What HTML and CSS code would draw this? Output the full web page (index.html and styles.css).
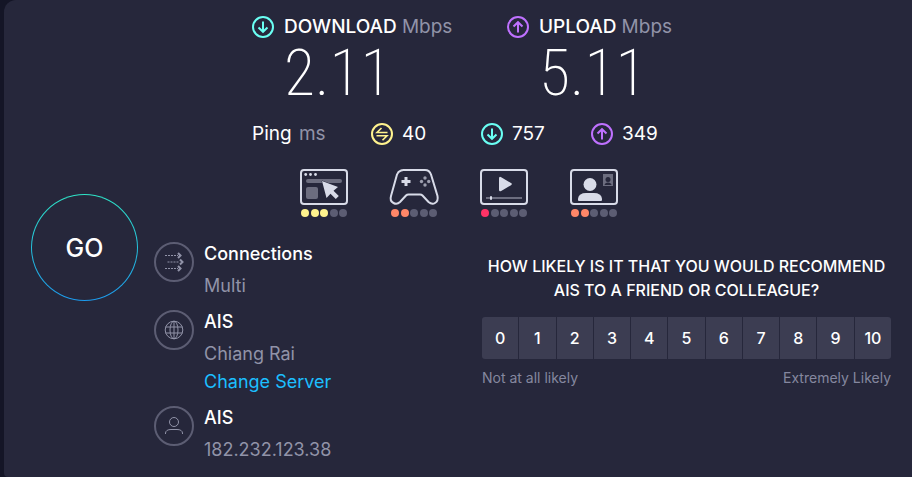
FILE: index.html
```html
<!DOCTYPE html>
<html lang="en">
<head>
	<meta charset="utf-8">
	<meta name="viewport" content="width=device-width, initial-scale=1">
	<title>Speed Test</title>
	<link rel="stylesheet" href="styles.css">
</head>
<body>
	<!-- shared icons -->
	<svg class="sprite" aria-hidden="true">
		<symbol id="icon-down" viewBox="0 0 22 22">
			<circle cx="11" cy="11" r="10"/>
			<path d="M11 5.500v10M6.500 11.500l4.500 4.300 4.500-4.300"/>
		</symbol>
		<symbol id="icon-up" viewBox="0 0 22 22">
			<circle cx="11" cy="11" r="10"/>
			<path d="M11 16.500v-10M6.500 10.500L11 6.200l4.500 4.300"/>
		</symbol>
		<symbol id="icon-ping" viewBox="0 0 22 22">
			<circle cx="11" cy="11" r="10"/>
			<path stroke-width="1.600" d="M16.500 9.500H6l4.500-4.500M5.500 12.800H16l-4.500 4.500"/>
		</symbol>
	</svg>

	<main class="panel">
		<button class="go" type="button">GO</button>

		<div class="content">
			<section class="results">
				<div class="speeds">
					<div class="speed">
						<svg class="icon download"><use href="#icon-down"/></svg>
						<h2>DOWNLOAD <span class="unit">Mbps</span></h2>
						<p class="value">2.11</p>
					</div>
					<div class="speed">
						<svg class="icon upload"><use href="#icon-up"/></svg>
						<h2>UPLOAD <span class="unit">Mbps</span></h2>
						<p class="value">5.11</p>
					</div>
				</div>

				<div class="pings">
					<div>Ping <span class="unit ms">ms</span></div>
					<div class="ping"><svg class="icon idle"><use href="#icon-ping"/></svg>40</div>
					<div class="ping"><svg class="icon download"><use href="#icon-down"/></svg>757</div>
					<div class="ping"><svg class="icon upload"><use href="#icon-up"/></svg>349</div>
				</div>

				<div class="scores">
					<div class="score yellow">
						<svg viewBox="0 0 48 36">
							<rect class="line" x="1" y="1" width="46" height="34" rx="3"/>
							<g class="fill"><circle cx="5.700" cy="5.500" r="1.400"/><circle cx="10.500" cy="5.500" r="1.400"/><circle cx="15.500" cy="5.500" r="1.400"/></g>
							<rect class="dim" x="6" y="10" width="36" height="4" rx="2"/>
							<rect class="dim" x="6" y="18" width="12" height="12" rx="2"/>
							<path class="fill edge" d="M22 12l4.500 17 4-4.300 5.300 5.300 3-3-5.300-5.300 4.500-3.700z"/>
						</svg>
						<div class="dots"><i class="on"></i><i class="on"></i><i class="on"></i><i></i><i></i></div>
					</div>
					<div class="score orange">
						<svg viewBox="0 0 48 36">
							<path class="line" d="M11 1.500Q12 1 13.500 1H35Q39.500 1 41 5.500L47.500 27Q48.500 32 45 34Q42 35.800 38.500 33L32.500 26.500Q31.500 25.500 30 25.500H18.500Q17 25.500 16 26.500L10 33Q7 35.800 3.500 34Q-.5 32 1 27L7 5.500Q8 2.500 11 1.500Z"/>
							<path class="fill" d="M14.500 8h3v3h3v3h-3v3h-3v-3h-3v-3h3z"/>
							<g class="soft"><circle cx="35" cy="9" r="1.700"/><circle cx="38.700" cy="12.500" r="1.700"/><circle cx="31.500" cy="12.500" r="1.700"/><circle cx="35" cy="16" r="1.700"/></g>
						</svg>
						<div class="dots"><i class="on"></i><i class="on"></i><i></i><i></i><i></i></div>
					</div>
					<div class="score red">
						<svg viewBox="0 0 48 36">
							<rect class="line" x="1" y="1" width="46" height="34" rx="3"/>
							<path class="fill" d="M19 9.500q0-2.500 2.200-1.300L31 14q1.800 1 0 2.200L21.200 22q-2.200 1-2.200-1.200z"/>
							<rect class="dim" x="6" y="28" width="36" height="2"/>
							<rect class="fill" x="10" y="27" width="2" height="4" rx="1"/>
						</svg>
						<div class="dots"><i class="on"></i><i></i><i></i><i></i><i></i></div>
					</div>
					<div class="score orange">
						<svg viewBox="0 0 48 36">
							<rect class="line" x="1" y="1" width="46" height="34" rx="3"/>
							<circle class="fill" cx="20" cy="15.500" r="6.500"/>
							<path class="fill" d="M8 31v-1.500Q9 24 16 24h8q7 0 8 5.500V31q0 1-1 1H9q-1 0-1-1z"/>
							<rect class="dim" x="33" y="5" width="10" height="12"/>
							<circle cx="38" cy="10.500" r="2.500" fill="#26273b"/>
							<path d="M34.500 16q.5-2.500 3.500-2.500t3.500 2.500z" fill="#26273b"/>
						</svg>
						<div class="dots"><i class="on"></i><i class="on"></i><i></i><i></i><i></i></div>
					</div>
				</div>
			</section>

			<div class="bottom">
				<ul class="info">
					<li>
						<svg class="badge" viewBox="0 0 40 40">
							<circle class="ring" cx="20" cy="20" r="19"/>
							<path class="dash" d="M11 13.500h13M13.500 20h12M11 26.500h13"/>
							<path class="arrows" d="M24 11l2.500 2.500L24 16M26 17.500l2.500 2.500-2.500 2.500M24 24l2.500 2.500L24 29"/>
						</svg>
						<div>
							<h3>Connections</h3>
							<p>Multi</p>
						</div>
					</li>
					<li>
						<svg class="badge" viewBox="0 0 40 40">
							<circle class="ring" cx="20" cy="20" r="19"/>
							<circle cx="20" cy="20" r="8.800"/>
							<ellipse cx="20" cy="20" rx="4" ry="8.800"/>
							<path d="M20 11v18M11.500 17h17M11.500 23h17"/>
						</svg>
						<div>
							<h3>AIS</h3>
							<p>Chiang Rai</p>
							<a href="#">Change Server</a>
						</div>
					</li>
					<li>
						<svg class="badge" viewBox="0 0 40 40">
							<circle class="ring" cx="20" cy="20" r="19"/>
							<circle cx="20" cy="16" r="4.500"/>
							<path d="M11.500 28v-1Q12 23.500 17 23.500h6q5 0 5.500 3.500v1"/>
						</svg>
						<div>
							<h3>AIS</h3>
							<p>182.232.123.38</p>
						</div>
					</li>
				</ul>

				<section class="survey">
					<h4>HOW LIKELY IS IT THAT YOU WOULD RECOMMEND AIS TO A FRIEND OR COLLEAGUE?</h4>
					<div class="scale">
						<button type="button">0</button>
						<button type="button">1</button>
						<button type="button">2</button>
						<button type="button">3</button>
						<button type="button">4</button>
						<button type="button">5</button>
						<button type="button">6</button>
						<button type="button">7</button>
						<button type="button">8</button>
						<button type="button">9</button>
						<button type="button">10</button>
					</div>
					<div class="legend"><span>Not at all likely</span><span>Extremely Likely</span></div>
				</section>
			</div>
		</div>
	</main>
</body>
</html>
```

FILE: styles.css
```css
* {
	box-sizing: border-box;
}
body {
	margin: 0;
	padding-left: 4px;
	background: #141526;
	color: #fff;
	font-family: Inter, "Open Sans", sans-serif;
	font-size: 18px;
	line-height: 24px;
}
h2, h3, h4, p, ul {
	margin: 0;
	padding: 0;
	font-size: inherit;
	font-weight: 500;
}
button {
	font-family: inherit;
	color: #fff;
	cursor: pointer;
}
.sprite {
	display: none;
}
.panel {
	display: flex;
	align-items: flex-start;
	gap: 16px;
	min-height: 100vh;
	padding: 15px 21px 12px 27px;
	background: #26273b;
	border-radius: 12px 0 0 4px;
}

/* start button */
.go {
	flex: none;
	width: 107px;
	height: 107px;
	margin-top: 179px;
	border: 1px solid transparent;
	border-radius: 50%;
	background: linear-gradient(#26273b, #26273b) padding-box, linear-gradient(#2ee6c8, #1c9bef) border-box;
	font-size: 25px;
	font-weight: 500;
}
.content {
	flex: 1;
}
.results {
	padding-left: 98px;
	font-size: 19px;
}
.unit {
	color: #9193a8;
	font-weight: 400;
}
.icon {
	flex: none;
	width: 22px;
	height: 22px;
	fill: none;
	stroke: currentColor;
	stroke-width: 2;
}
.download {
	color: #6afff3;
}
.upload {
	color: #bf71ff;
}
.idle {
	color: #fff38e;
}

/* download and upload */
.speeds {
	display: grid;
	grid-template-columns: 255px auto;
	justify-content: start;
}
.speed {
	display: grid;
	grid-template-columns: 22px auto;
	column-gap: 10px;
	align-items: center;
	justify-content: start;
}
.value {
	grid-column: 2;
	height: 72px;
	font-family: "Roboto Condensed", Roboto, sans-serif;
	font-size: 64px;
	font-weight: 200;
	line-height: 70px;
}
.pings {
	display: grid;
	grid-template-columns: 119px 110px 110px auto;
	justify-content: start;
	margin-top: 11px;
}
.ping {
	display: flex;
	align-items: center;
	gap: 9px;
}
.ms {
	margin-left: 2px;
}

/* quality scores */
.scores {
	display: flex;
	gap: 42px;
	margin: 23px 0 0 48px;
}
.score {
	width: 48px;
}
.score svg {
	display: block;
	width: 48px;
	height: 36px;
	overflow: visible;
}
.line {
	fill: none;
	stroke: #d8dbe8;
	stroke-width: 2;
}
.fill {
	fill: #d8dbe8;
}
.edge {
	stroke: #26273b;
	stroke-width: 1;
	paint-order: stroke;
}
.dim {
	fill: #6c6d7f;
}
.soft {
	fill: #9c9eae;
}
.dots {
	display: flex;
	justify-content: space-between;
	margin-top: 4px;
	padding: 0 1px;
}
.dots i {
	width: 8px;
	height: 8px;
	border-radius: 50%;
	background: #5c5d73;
}
.yellow .on {
	background: #fff38e;
}
.orange .on {
	background: #ff8768;
}
.red .on {
	background: #ff3366;
}

.bottom {
	display: flex;
	justify-content: space-between;
	margin-top: 25px;
}
.info {
	display: flex;
	flex-direction: column;
	gap: 10px;
	list-style: none;
}
.info li {
	display: flex;
	align-items: flex-start;
	gap: 10px;
}
.badge {
	width: 40px;
	height: 40px;
	fill: none;
	stroke: #9193a8;
}
.ring {
	stroke: #5c5d73;
	stroke-width: 2;
}
.dash {
	stroke-dasharray: 2 1;
}
.arrows {
	stroke-width: 2;
}
.info h3 {
	margin-bottom: 6px;
}
.info p, .info a {
	display: block;
	font-weight: 400;
	line-height: 28px;
	color: #9193a8;
}
.info a {
	color: #1cbfff;
	text-decoration: none;
}

/* survey */
.survey {
	width: 409px;
	padding-top: 12px;
}
.survey h4 {
	font-size: 16px;
	text-align: center;
}
.scale {
	display: grid;
	grid-template-columns: repeat(11, 1fr);
	gap: 1px;
	margin-top: 15px;
	border-radius: 3px;
	overflow: hidden;
}
.scale button {
	height: 42px;
	padding: 0;
	border: 0;
	background: #3c3d52;
	font-size: 16px;
	font-weight: 500;
}
.legend {
	display: flex;
	justify-content: space-between;
	margin-top: 7px;
	color: #85879f;
	font-size: 14px;
}
```
